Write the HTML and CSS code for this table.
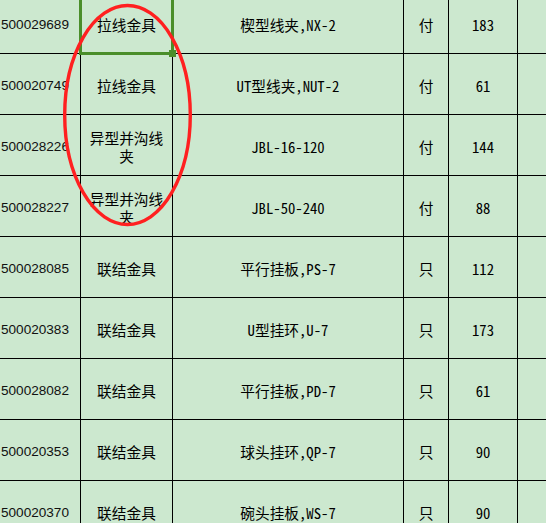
FILE: index.html
```html
<!DOCTYPE html>
<html lang="zh-CN">
<head>
<meta charset="utf-8">
<link rel="stylesheet" href="styles.css">
</head>
<body>
<div class="sheet">
  <div class="grid">
    <div class="c a"><span>500029689</span></div><div class="c b">拉线金具</div><div class="c m">楔型线夹,NX-2</div><div class="c m">付</div><div class="c m">183</div><div class="c f"></div>
    <div class="c a"><span>500020749</span></div><div class="c b">拉线金具</div><div class="c m">UT型线夹,NUT-2</div><div class="c m">付</div><div class="c m">61</div><div class="c f"></div>
    <div class="c a"><span>500028226</span></div><div class="c b two"><span class="ln">异型并沟线</span><span class="ln">夹</span></div><div class="c m">JBL-16-120</div><div class="c m">付</div><div class="c m">144</div><div class="c f"></div>
    <div class="c a"><span>500028227</span></div><div class="c b two"><span class="ln">异型并沟线</span><span class="ln">夹</span></div><div class="c m">JBL-50-240</div><div class="c m">付</div><div class="c m">88</div><div class="c f"></div>
    <div class="c a"><span>500028085</span></div><div class="c b">联结金具</div><div class="c m">平行挂板,PS-7</div><div class="c m">只</div><div class="c m">112</div><div class="c f"></div>
    <div class="c a"><span>500020383</span></div><div class="c b">联结金具</div><div class="c m">U型挂环,U-7</div><div class="c m">只</div><div class="c m">173</div><div class="c f"></div>
    <div class="c a"><span>500028082</span></div><div class="c b">联结金具</div><div class="c m">平行挂板,PD-7</div><div class="c m">只</div><div class="c m">61</div><div class="c f"></div>
    <div class="c a"><span>500020353</span></div><div class="c b">联结金具</div><div class="c m">球头挂环,QP-7</div><div class="c m">只</div><div class="c m">90</div><div class="c f"></div>
    <div class="c a"><span>500020370</span></div><div class="c b">联结金具</div><div class="c m">碗头挂板,WS-7</div><div class="c m">只</div><div class="c m">90</div><div class="c f"></div>
  </div>
  <div class="selection"></div>
  <div class="handle"></div>
  <svg class="mark" width="546" height="523" viewBox="0 0 546 523">
    <ellipse cx="127.5" cy="115" rx="62.8" ry="109.5" fill="none" stroke="#ff2020" stroke-width="3.4"/>
  </svg>
</div>
</body>
</html>
```
FILE: styles.css
```css
html, body {
  margin: 0;
  padding: 0;
  background: #cce8cf;
  overflow: hidden;
}
.sheet {
  position: relative;
  width: 546px;
  height: 523px;
  overflow: hidden;
  background: #cce8cf;
}
.grid {
  margin-top: -7px;
  display: grid;
  grid-template-columns: 81px 92px 231px 45px 69px 60px;
  grid-auto-rows: 61px;
  font-family: "Noto Sans Mono CJK SC", "Noto Sans CJK SC", monospace;
  font-size: 14.7px;
  font-weight: 300;
  color: #000;
}
.c {
  box-sizing: border-box;
  border-right: 1px solid #000;
  border-bottom: 1px solid #000;
  display: flex;
  align-items: center;
  justify-content: center;
  text-align: center;
  padding-top: 3px;
  white-space: nowrap;
}
.a {
  justify-content: flex-end;
  padding-right: 11px;
  font-family: "Liberation Sans", Arial, sans-serif;
  font-size: 13.6px;
  font-weight: 400;
  color: #111;
  overflow: hidden;
}
.two {
  flex-direction: column;
  padding-top: 4px;
}
.ln {
  display: block;
  height: 18.3px;
  line-height: 18.3px;
  overflow: visible;
}
.f {
  border-right: none;
}
.selection {
  position: absolute;
  left: 79px;
  top: -10px;
  width: 95px;
  height: 65px;
  box-sizing: border-box;
  border: 3px solid #4a8e2a;
}
.handle {
  position: absolute;
  left: 169px;
  top: 50px;
  width: 7px;
  height: 7px;
  background: #4a8e2a;
}
.mark {
  position: absolute;
  left: 0;
  top: 0;
}
```
